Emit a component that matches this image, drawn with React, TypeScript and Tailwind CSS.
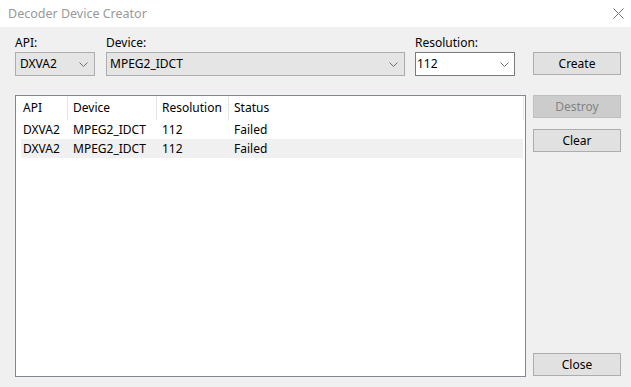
import React from "react";

const Chevron = () => (
  <svg width="9" height="5" viewBox="0 0 9 5" className="block">
    <path d="M0.5 0.5 L4.5 4.5 L8.5 0.5" fill="none" stroke="#6d6d6d" strokeWidth="1" />
  </svg>
);

const Btn = ({ children, disabled = false, className = "" }: { children: React.ReactNode; disabled?: boolean; className?: string }) => (
  <div
    className={
      "w-[88px] h-[23px] flex items-center justify-center border " +
      (disabled
        ? "bg-[#cccccc] border-[#bfbfbf] text-[#838383] "
        : "bg-[#e1e1e1] border-[#adadad] text-black ") +
      className
    }
  >
    {children}
  </div>
);

const rows = [
  { api: "DXVA2", dev: "MPEG2_IDCT", res: "112", status: "Failed", hl: false },
  { api: "DXVA2", dev: "MPEG2_IDCT", res: "112", status: "Failed", hl: true },
];

export default function App() {
  return (
    <div
      className="w-[631px] h-[387px] bg-[#f0f0f0] flex flex-col text-[12px] leading-[16px] text-black overflow-hidden"
      style={{ fontFamily: '"Noto Sans", "Open Sans", sans-serif' }}
    >
      <div className="h-[27px] bg-white flex items-center justify-between pl-[8px] pr-[7px] shrink-0">
        <span className="text-[#999999] text-[12.5px]">Decoder Device Creator</span>
        <svg width="11" height="11" viewBox="0 0 11 11" className="block">
          <path d="M0.5 0.5 L10.5 10.5 M10.5 0.5 L0.5 10.5" stroke="#777" strokeWidth="1" />
        </svg>
      </div>
      <div className="flex flex-col pl-[15px] pt-[8px]">
        <div className="flex items-start">
          <div className="flex flex-col w-[80px]">
            <span className="h-[16px]">API:</span>
            <div className="mt-[1px] h-[24px] bg-[#e5e5e5] border border-[#adadad] flex items-center justify-between pl-[4px] pr-[6px]">
              <span>DXVA2</span>
              <Chevron />
            </div>
          </div>
          <div className="flex flex-col w-[299px] ml-[11px]">
            <span className="h-[16px]">Device:</span>
            <div className="mt-[1px] h-[24px] bg-[#e5e5e5] border border-[#adadad] flex items-center justify-between pl-[3px] pr-[6px]">
              <span>MPEG2_IDCT</span>
              <Chevron />
            </div>
          </div>
          <div className="flex flex-col w-[100px] ml-[10px]">
            <span className="h-[16px]">Resolution:</span>
            <div className="mt-[1px] h-[24px] bg-white border border-[#7a7a7a] flex items-center justify-between pl-[1px] pr-[5px]">
              <span>112</span>
              <Chevron />
            </div>
          </div>
          <Btn className="ml-[18px] mt-[17px]">Create</Btn>
        </div>
        <div className="flex mt-[19px]">
          <div className="w-[511px] h-[282px] bg-white border border-[#828790] flex flex-col">
            <div className="h-[24px] flex ml-[5px] mr-[1px]">
              <div className="w-[47px] pl-[2px] flex items-center border-r border-[#e5e5e5]">API</div>
              <div className="w-[89px] pl-[5px] flex items-center border-r border-[#e5e5e5]">Device</div>
              <div className="w-[72px] pl-[5px] flex items-center border-r border-[#e5e5e5]">Resolution</div>
              <div className="flex-1 pl-[5px] flex items-center border-r border-[#e5e5e5]">Status</div>
            </div>
            {rows.map((r, i) => (
              <div key={i} className={"h-[19px] flex items-center ml-[5px] mr-[2px] pl-[2px] " + (r.hl ? "bg-[#f0f0f0]" : "")}>
                <span className="w-[50px]">{r.api}</span>
                <span className="w-[89px]">{r.dev}</span>
                <span className="w-[72px]">{r.res}</span>
                <span>{r.status}</span>
              </div>
            ))}
          </div>
          <div className="flex flex-col justify-between ml-[7px] pb-[1px]">
            <div className="flex flex-col gap-[11px]">
              <Btn disabled>Destroy</Btn>
              <Btn>Clear</Btn>
            </div>
            <Btn>Close</Btn>
          </div>
        </div>
      </div>
    </div>
  );
}
